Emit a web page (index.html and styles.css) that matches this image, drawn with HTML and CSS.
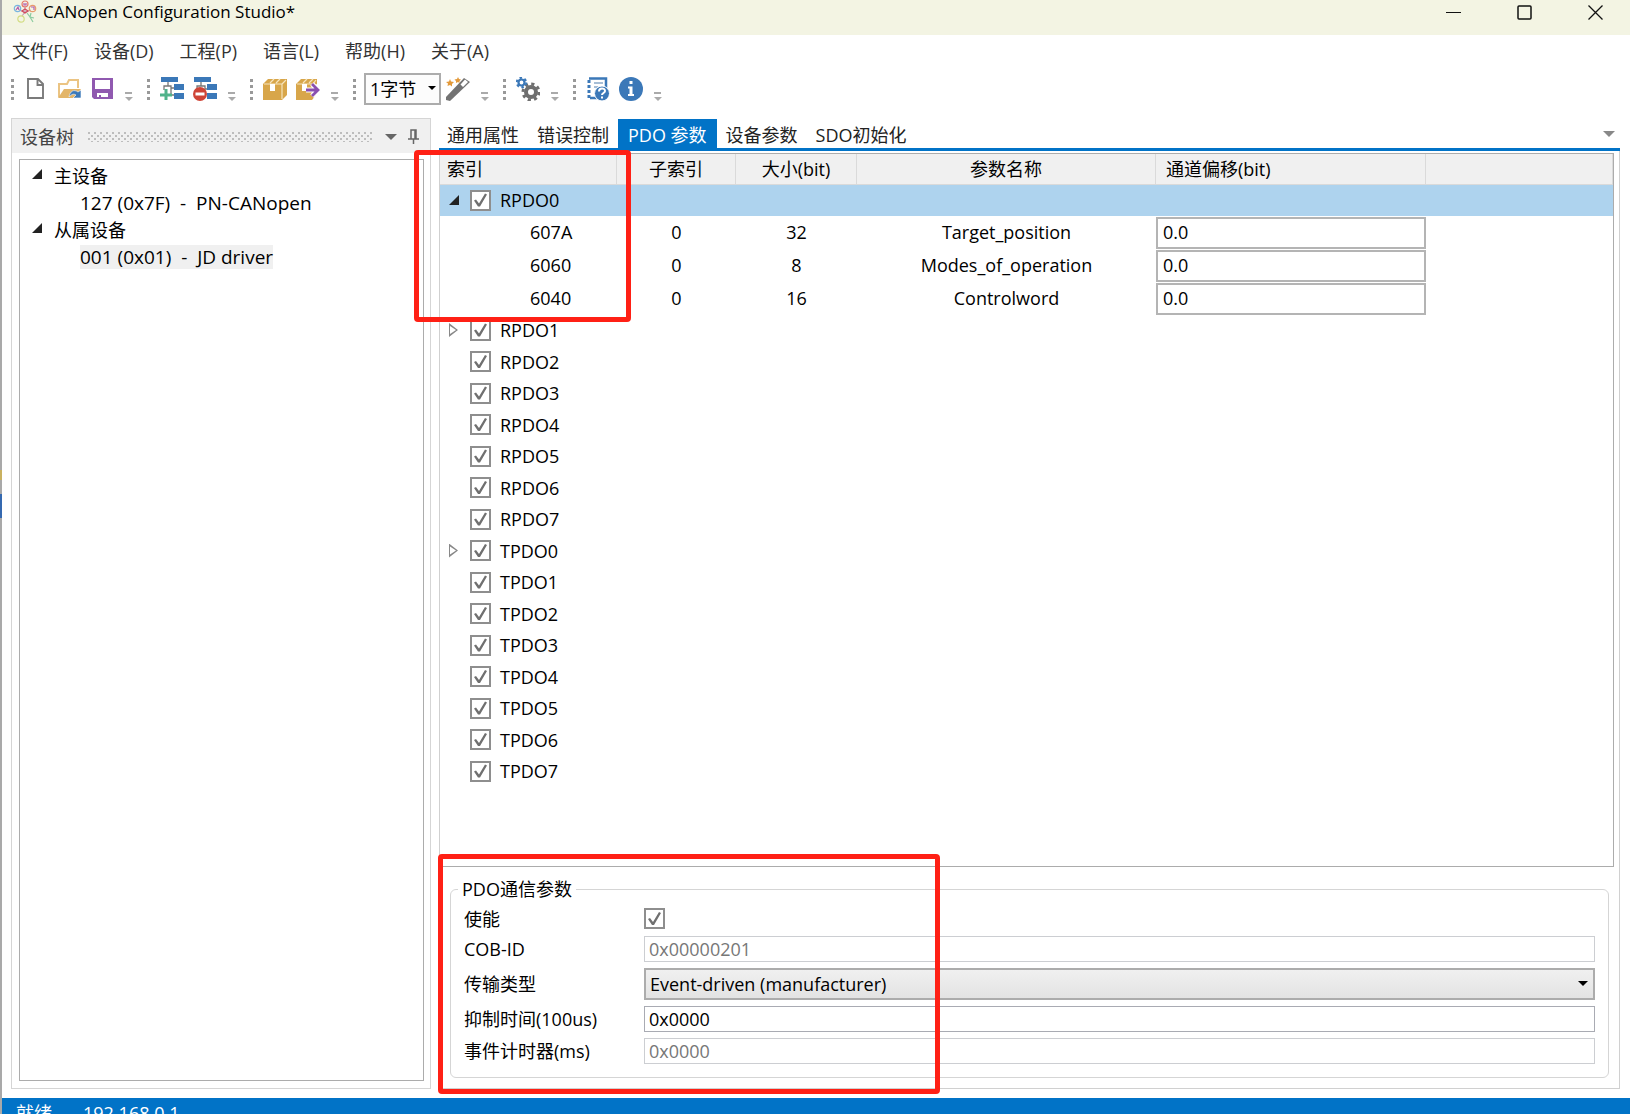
FILE: index.html
```
<!DOCTYPE html>
<html lang="zh-CN">
	<head>
		<meta charset="UTF-8" />

		<title>CANopen Configuration Studio*</title>

		<link rel="stylesheet" href="styles.css">

	</head>
	<body>

		<div id="app">

			<header id="titlebar">
				<svg class="logo" width="24" height="24" viewBox="0 0 24 24" fill="none" stroke-width="1.200">
					<path d="M12 12L6 10M12 12L12 6M12 12L18 10M12 12L9 16" stroke="#c9a0b8" />
					<circle cx="12" cy="4" r="3" stroke="#e5786b" />
					<circle cx="4.500" cy="8.500" r="3.200" stroke="#77b5e0" />
					<circle cx="19.500" cy="8.500" r="3.200" stroke="#e89a6c" />
					<circle cx="8" cy="19" r="3.200" stroke="#d3dd84" />
					<path d="M11 3v2h2V3M3 10l2-3 1 3M18 7h3v3" stroke="#b25fae" />
					<path d="M9 11l3-2 3 2-3 2z" stroke="#d04a5c" />
					<path d="M14 13l3 4M18 13l-1 4 4 1M17 17l3 5" stroke="#8ccba0" />
				</svg>
				<span class="title">CANopen Configuration Studio*</span>
				<div class="window-buttons">
					<button type="button" aria-label="最小化"><svg width="16" height="16" viewBox="0 0 16 16"><path d="M0 7.500h15" /></svg></button>
					<button type="button" aria-label="最大化"><svg width="16" height="16" viewBox="0 0 16 16"><rect x="1" y="1" width="13" height="13" rx="1" stroke-width="1.500" /></svg></button>
					<button type="button" aria-label="关闭"><svg width="16" height="16" viewBox="0 0 16 16"><path d="M.5.5l14 14M14.500.5l-14 14" stroke-width="1.300" /></svg></button>
				</div>
			</header>

			<nav id="menubar">
				<a href="#">文件(F)</a>
				<a href="#">设备(D)</a>
				<a href="#">工程(P)</a>
				<a href="#">语言(L)</a>
				<a href="#">帮助(H)</a>
				<a href="#">关于(A)</a>
			</nav>

			<div id="toolbar">
				<div class="group">
					<i class="grip"></i>
					<button type="button" class="tool" aria-label="新建">
						<svg width="24" height="24" viewBox="0 0 24 24"><path d="M4 2h10l5 5v14H4zM13.500 2v6H19" fill="#fff" stroke="#7b7b7b" stroke-width="1.900" /></svg>
					</button>
					<button type="button" class="tool" aria-label="打开">
						<svg width="24" height="24" viewBox="0 0 24 24">
							<path d="M2 20V7h8l2-4h9v8" fill="none" stroke="#ebc483" stroke-width="2" />
							<path d="M1 21l6-9h17l-5 9z" fill="#e3b569" />
							<path d="M12 20c1-6 5-8 9-5l3-2v8h-8l3-3c-3-2-5 0-7 2z" fill="#3b78b8" stroke="#fff" stroke-width=".6" />
						</svg>
					</button>
					<button type="button" class="tool" aria-label="保存">
						<svg width="24" height="24" viewBox="0 0 24 24">
							<path d="M2 1h21v21H4l-2-2z" fill="#9059b0" />
							<path d="M5 3h15v9H5zM7 16h11v4h-7v-2H9v2H7z" fill="#fff" />
						</svg>
					</button>
					<i class="overflow"></i>
				</div>
				<div class="group">
					<i class="grip"></i>
					<button type="button" class="tool" aria-label="添加设备">
						<svg width="24" height="24" viewBox="0 0 24 24">
							<path d="M8 4v5H4v4M8 9h3v9h4M11 11h4" fill="none" stroke="#777" stroke-width="1.300" />
							<path d="M1 0h17v5H1zM14 7h10v6H14zM14 16h10v6H14z" fill="#3b78b8" />
							<path d="M6 12v11M0 18h12" stroke="#4fb38a" stroke-width="3" />
						</svg>
					</button>
					<button type="button" class="tool" aria-label="删除设备">
						<svg width="24" height="24" viewBox="0 0 24 24">
							<path d="M8 4v5H4v4M8 9h4v3h3" fill="none" stroke="#777" stroke-width="1.300" />
							<path d="M1 0h17v5H1zM14 7h10v6H14zM14 16h10v6H14z" fill="#3b78b8" />
							<circle cx="7" cy="17" r="7" fill="#cf4436" />
							<path d="M2.500 17h9" stroke="#fff" stroke-width="3" />
						</svg>
					</button>
					<i class="overflow"></i>
				</div>
				<div class="group">
					<i class="grip"></i>
					<button type="button" class="tool" aria-label="打包">
						<svg width="24" height="24" viewBox="0 0 24 24">
							<path d="M0 7l5-5h19v16l-5 5H0z" fill="#d8a64a" />
							<path d="M1 7h18M19 22V7l4-4M7 6l4-4M13 6l4-4" fill="none" stroke="#f6e4bd" stroke-width="1.200" />
							<path d="M7 7h5v7H7z" fill="#fff" />
						</svg>
					</button>
					<button type="button" class="tool" aria-label="导出">
						<svg width="24" height="24" viewBox="0 0 24 24">
							<path d="M0 7l5-5h16v5l-5 3v5h4v3l-4 5H0z" fill="#d8a64a" />
							<path d="M1 7h16l3-4M7 6l4-4M13 6l4-4" fill="none" stroke="#f6e4bd" stroke-width="1.200" />
							<path d="M6 7h5v7H6z" fill="#fff" />
							<path d="M10 13h12M16 7l6 6-6 6" fill="none" stroke="#fff" stroke-width="5" />
							<path d="M10 13h12M16 7l6 6-6 6" fill="none" stroke="#8a4fb0" stroke-width="2.800" />
						</svg>
					</button>
					<i class="overflow"></i>
				</div>
				<div class="group">
					<i class="grip"></i>
					<div class="combo">
						<select aria-label="字节">
							<option>1字节</option>
							<option>2字节</option>
							<option>4字节</option>
						</select>
					</div>
					<button type="button" class="tool" aria-label="向导">
						<svg width="24" height="24" viewBox="0 0 24 24">
							<path d="M0 20L18 1l6 4L4 24l-4-1z" fill="#737373" />
							<path d="M14.500 7.500l4.500-5 3 2.500-5 5z" fill="#fff" />
							<path d="M4 2l1 2.500 3 .5-2 2v2.500L4 8 1.500 9 2 6.500 0 5l3-.5zM12 0l1 2 2 .5-1.500 1.500v2L12 5l-2 1V4L8.500 2.500 11 2z" fill="#e39a3b" />
						</svg>
					</button>
					<i class="overflow"></i>
				</div>
				<div class="group">
					<i class="grip"></i>
					<button type="button" class="tool" aria-label="设置">
						<svg width="24" height="24" viewBox="0 0 24 24" fill="none">
							<circle cx="15" cy="15" r="5" stroke="#6f6f6f" stroke-width="4" />
							<circle cx="15" cy="15" r="8" stroke="#6f6f6f" stroke-width="3" stroke-dasharray="3.140 3.140" />
							<circle cx="5.500" cy="5.500" r="3" stroke="#3b78b8" stroke-width="2.200" />
							<circle cx="5.500" cy="5.500" r="4.800" stroke="#3b78b8" stroke-width="2" stroke-dasharray="2.500 2.530" />
						</svg>
					</button>
					<i class="overflow"></i>
				</div>
				<div class="group">
					<i class="grip"></i>
					<button type="button" class="tool" aria-label="帮助">
						<svg width="24" height="24" viewBox="0 0 24 24">
							<path d="M3 1.500h17V11M4 21h7" fill="none" stroke="#3b78b8" stroke-width="2.500" />
							<path d="M3 3v18" stroke="#3b78b8" stroke-width="3" stroke-dasharray="3 2" />
							<path d="M8 6h9M8 10h4M8 16h2" stroke="#8aa9c9" stroke-width="1.500" />
							<circle cx="16" cy="16.500" r="7.500" fill="#3b78b8" stroke="#fff" />
							<path d="M13 14.500c0-4 6-4 6-.5 0 2-3 2-3 4M16 19.500v2" fill="none" stroke="#fff" stroke-width="2" />
						</svg>
					</button>
					<button type="button" class="tool" aria-label="关于">
						<svg width="24" height="24" viewBox="0 0 24 24">
							<circle cx="12" cy="12" r="12" fill="#3b78b8" />
							<path d="M10.500 4h3v3h-3zM9 9.500h4.500V17H15v2H9v-2h1.500v-5.500H9z" fill="#fff" />
						</svg>
					</button>
					<i class="overflow"></i>
				</div>
			</div>

			<main id="workspace">

				<aside id="devices">
					<div class="panel-header">
						<span>设备树</span>
						<svg class="dots" width="100%" height="10">
							<defs>
								<pattern id="dot" width="6" height="6" patternUnits="userSpaceOnUse">
									<path d="M0 0h2v2H0zM3 3h2v2H3z" fill="#bdbdbd" />
								</pattern>
							</defs>
							<rect width="100%" height="10" fill="url(#dot)" />
						</svg>
						<i class="arrow-down"></i>
						<svg width="12" height="16" viewBox="0 0 12 16"><path d="M3 10V1h5v9M7 1v9M0 10h11M5.500 10v5" fill="none" stroke="#666" stroke-width="1.500" /></svg>
					</div>
					<div class="tree">
						<ul>
							<li>
								<i class="open"></i>主设备
								<ul>
									<li><span>127 (0x7F)&nbsp; -&nbsp; PN-CANopen</span></li>
								</ul>
							</li>
							<li>
								<i class="open"></i>从属设备
								<ul>
									<li><span class="selected">001 (0x01)&nbsp; -&nbsp; JD driver</span></li>
								</ul>
							</li>
						</ul>
					</div>
				</aside>

				<section id="content">

					<div id="tabs" role="tablist">
						<button type="button" role="tab">通用属性</button>
						<button type="button" role="tab">错误控制</button>
						<button type="button" role="tab" class="active" aria-selected="true">PDO 参数</button>
						<button type="button" role="tab">设备参数</button>
						<button type="button" role="tab">SDO初始化</button>
						<i class="arrow-down"></i>
					</div>

					<div id="page">

						<div class="grid">
							<table>
								<colgroup>
									<col class="index" />
									<col class="sub" />
									<col class="size" />
									<col class="name" />
									<col class="offset" />
									<col />
								</colgroup>
								<thead>
									<tr><th>索引</th><th>子索引</th><th>大小(bit)</th><th>参数名称</th><th>通道偏移(bit)</th><th></th></tr>
								</thead>
								<tbody>
									<tr class="pdo selected"><td colspan="6"><label><i class="open"></i><input type="checkbox" checked />RPDO0</label></td></tr>
									<tr class="entry"><td>607A</td><td>0</td><td>32</td><td>Target_position</td><td><input type="text" value="0.0" aria-label="607A" /></td><td></td></tr>
									<tr class="entry"><td>6060</td><td>0</td><td>8</td><td>Modes_of_operation</td><td><input type="text" value="0.0" aria-label="6060" /></td><td></td></tr>
									<tr class="entry"><td>6040</td><td>0</td><td>16</td><td>Controlword</td><td><input type="text" value="0.0" aria-label="6040" /></td><td></td></tr>
									<tr class="pdo"><td colspan="6"><label><i class="closed"></i><input type="checkbox" checked />RPDO1</label></td></tr>
									<tr class="pdo"><td colspan="6"><label><i></i><input type="checkbox" checked />RPDO2</label></td></tr>
									<tr class="pdo"><td colspan="6"><label><i></i><input type="checkbox" checked />RPDO3</label></td></tr>
									<tr class="pdo"><td colspan="6"><label><i></i><input type="checkbox" checked />RPDO4</label></td></tr>
									<tr class="pdo"><td colspan="6"><label><i></i><input type="checkbox" checked />RPDO5</label></td></tr>
									<tr class="pdo"><td colspan="6"><label><i></i><input type="checkbox" checked />RPDO6</label></td></tr>
									<tr class="pdo"><td colspan="6"><label><i></i><input type="checkbox" checked />RPDO7</label></td></tr>
									<tr class="pdo"><td colspan="6"><label><i class="closed"></i><input type="checkbox" checked />TPDO0</label></td></tr>
									<tr class="pdo"><td colspan="6"><label><i></i><input type="checkbox" checked />TPDO1</label></td></tr>
									<tr class="pdo"><td colspan="6"><label><i></i><input type="checkbox" checked />TPDO2</label></td></tr>
									<tr class="pdo"><td colspan="6"><label><i></i><input type="checkbox" checked />TPDO3</label></td></tr>
									<tr class="pdo"><td colspan="6"><label><i></i><input type="checkbox" checked />TPDO4</label></td></tr>
									<tr class="pdo"><td colspan="6"><label><i></i><input type="checkbox" checked />TPDO5</label></td></tr>
									<tr class="pdo"><td colspan="6"><label><i></i><input type="checkbox" checked />TPDO6</label></td></tr>
									<tr class="pdo"><td colspan="6"><label><i></i><input type="checkbox" checked />TPDO7</label></td></tr>
								</tbody>
							</table>
						</div>

						<fieldset>
							<legend>PDO通信参数</legend>
							<div class="params">
								<label for="enable">使能</label>
								<input type="checkbox" id="enable" checked />
								<label for="cobid">COB-ID</label>
								<input type="text" id="cobid" value="0x00000201" disabled />
								<label for="transmission">传输类型</label>
								<div class="combo">
									<select id="transmission">
										<option>Event-driven (manufacturer)</option>
									</select>
								</div>
								<label for="inhibit">抑制时间(100us)</label>
								<input type="text" id="inhibit" value="0x0000" />
								<label for="timer">事件计时器(ms)</label>
								<input type="text" id="timer" value="0x0000" disabled />
							</div>
						</fieldset>

					</div>

				</section>

			</main>

			<footer id="statusbar">
				<span>就绪</span>
				<span>192.168.0.1</span>
			</footer>

			<!-- highlights over the PDO mapping and its parameters -->
			<div class="mark mapping"></div>
			<div class="mark communication"></div>

		</div>

	</body>
</html>
```
FILE: styles.css
```
* {
	box-sizing: border-box;
}

body, button, input, select {
	font: 18px/24px "Open Sans", "Noto Sans CJK SC", sans-serif;
	color: #000;
}

body {
	margin: 0;
	background: #FFF;
}

button {
	background: none;
	border: 0;
	padding: 0;
}

ul {
	list-style: none;
	margin: 0;
	padding: 0;
}

svg {
	display: block;
	flex: none;
}

/* the neighbouring window shows through as a thin strip on the left */
#app {
	position: relative;
	display: flex;
	flex-direction: column;
	height: 100vh;
	overflow: hidden;
	padding-left: 2px;
	background: linear-gradient(#A9A9A9 470px, #C9B160 470px, #C9B160 480px, #A9A9A9 480px, #A9A9A9 494px, #3569B0 494px, #3569B0 518px, #A9A9A9 518px) 0 0 / 2px 100% no-repeat;
}

/* Title and menu */

#titlebar {
	flex: none;
	display: flex;
	align-items: flex-start;
	height: 35px;
	padding-left: 11px;
	background: #F3F4E3;
}

#titlebar .title {
	flex: 1;
	margin-left: 6px;
	font-size: 17px;
}

.window-buttons {
	display: flex;
	gap: 55px;
	padding: 5px 26px 0 0;
}

.window-buttons svg {
	fill: none;
	stroke: #111;
}

#menubar {
	flex: none;
	display: flex;
	gap: 26px;
	height: 33px;
	padding: 4px 10px;
}

#menubar a {
	color: #333;
	text-decoration: none;
}

/* Toolbar */

#toolbar {
	flex: none;
	display: flex;
	align-items: center;
	gap: 15px;
	height: 42px;
	padding-left: 9px;
}

.group {
	display: flex;
	align-items: center;
}

.grip {
	width: 3px;
	height: 21px;
	margin-right: 8px;
	background: repeating-linear-gradient(#999 0 3px, transparent 3px 6px);
}

.tool {
	width: 24px;
	height: 24px;
	margin: 0 7px 0 2px;
}

.overflow {
	width: 7px;
	height: 9px;
	margin: 14px 0 0 4px;
	background: linear-gradient(#AAA, #AAA) 0 0 / 7px 2px no-repeat;
}

.overflow::after {
	content: "";
	display: block;
	width: 0;
	margin-top: 5px;
	border: 4px solid transparent;
	border-top-color: #AAA;
	border-bottom: 0;
}

.combo {
	position: relative;
}

.combo select {
	appearance: none;
	width: 100%;
	height: 32px;
	padding: 0 4px;
	border: 2px solid #ACACAC;
	border-radius: 0;
	background: linear-gradient(#F0F0F0, #E3E3E3);
}

.combo::after {
	content: "";
	position: absolute;
	top: 13px;
	right: 7px;
	border: 5px solid transparent;
	border-top-color: #000;
	border-bottom: 0;
	pointer-events: none;
}

#toolbar .combo {
	width: 77px;
	margin-right: 3px;
}

#toolbar .combo::after {
	right: 5px;
	border-width: 4px 4px 0;
}

#toolbar .combo select {
	background: #FCFCFC;
}

/* Workspace */

#workspace {
	flex: 1;
	display: flex;
	gap: 8px;
	min-height: 0;
	padding: 8px 10px 9px 9px;
}

#devices {
	flex: none;
	display: flex;
	flex-direction: column;
	width: 420px;
	border: 1px solid #D5D5D5;
}

.panel-header {
	flex: none;
	display: flex;
	align-items: center;
	height: 34px;
	padding: 2px 10px 0 8px;
	background: #F0F0F0;
	color: #444;
}

.panel-header .dots {
	flex: 1;
	min-width: 0;
	margin: 0 13px 0 14px;
}

.arrow-down {
	border: 6px solid transparent;
	border-top-color: #666;
	border-bottom: 0;
}

.panel-header .arrow-down {
	margin-right: 11px;
}

.tree {
	flex: 1;
	margin: 6px 6px 7px 7px;
	padding: 3px 14px;
	border: 1px solid #ACACAC;
	line-height: 27px;
}

.tree > ul > li {
	padding-left: 20px;
}

.tree .open {
	float: left;
	margin: 6px 0 0 -22px;
}

.tree li li {
	padding-left: 26px;
	font-size: 19px;
}

.tree .selected {
	display: inline-block;
	height: 24px;
	line-height: 24px;
	background: #F0F0F0;
}

.open {
	width: 10px;
	height: 10px;
	background: #222;
	clip-path: polygon(100% 0, 100% 100%, 0 100%);
}

.closed {
	width: 9px;
	height: 14px;
	background: #888;
	clip-path: polygon(0 0, 100% 50%, 0 100%, 0 0, 1px 3px, 1px 11px, 7px 50%, 1px 3px);
}

#content {
	flex: 1;
	display: flex;
	flex-direction: column;
	min-width: 0;
}

#tabs {
	flex: none;
	display: flex;
	align-items: center;
	height: 33px;
	padding-top: 1px;
	border-bottom: 3px solid #0173C7;
}

#tabs button {
	align-self: stretch;
	padding: 2px 9px 0;
	color: #222;
}

#tabs button:first-child {
	padding-left: 8px;
}

#tabs .active {
	padding: 2px 10px 0;
	background: #0173C7;
	color: #FFF;
}

#tabs .arrow-down {
	margin: 0 5px 0 auto;
	border-top-color: #888;
}

#page {
	flex: 1;
	display: flex;
	flex-direction: column;
	min-height: 0;
	padding-top: 2px;
	border: 1px solid #D0D0D0;
	border-top: 0;
}

/* PDO table */

.grid {
	flex: 1;
	min-height: 0;
	margin-right: 5px;
	overflow: hidden;
	border: 1px solid #ACACAC;
	border-width: 1px 1px 1px 0;
}

table {
	width: 100%;
	table-layout: fixed;
	border-spacing: 0;
}

.index {
	width: 177px;
}

.sub {
	width: 119px;
}

.size {
	width: 121px;
}

.name {
	width: 299px;
}

.offset {
	width: 270px;
}

th, td {
	padding: 0;
	text-align: center;
}

th {
	height: 31px;
	border: 1px solid #DADADA;
	border-width: 0 1px 1px 0;
	background: #F0F0F0;
	font-weight: normal;
}

th:first-child, th:nth-child(5) {
	padding-left: 7px;
	text-align: left;
}

th:nth-child(5) {
	padding-left: 10px;
}

.pdo {
	height: 31px;
}

.pdo:nth-child(even) {
	height: 32px;
}

.pdo.selected {
	background: #AED3EE;
}

.pdo label {
	display: flex;
	align-items: center;
	padding: 0 0 1px 9px;
}

.pdo i {
	margin-right: 11px;
}

.pdo i:not(.open) {
	width: 9px;
	margin-right: 12px;
}

.entry {
	height: 33px;
}

.entry td {
	padding-bottom: 2px;
}

.entry td:nth-child(5) {
	padding: 0;
}

.entry td:first-child {
	padding-left: 90px;
	text-align: left;
}

.entry input {
	display: block;
	width: 100%;
	height: 32px;
}

.entry input[type="text"] {
	padding: 0 5px 2px;
	border: 2px solid #B4B4B4;
}

input[type="text"] {
	border: 1px solid #A9ABB3;
	background: #FFF;
}

input[type="checkbox"] {
	appearance: none;
	width: 21px;
	height: 21px;
	margin: 0;
	border: 2px solid #8E8E8E;
	background: #FFF;
}

input[type="checkbox"]:checked::after {
	content: "";
	display: block;
	width: 17px;
	height: 17px;
	background: #707070;
	clip-path: polygon(2px 9px, 4px 8px, 7px 12px, 13px 2px, 15px 3px, 8px 15px, 6px 15px);
}

.pdo input[type="checkbox"] {
	margin-right: 9px;
}

/* Communication parameters */

fieldset {
	flex: none;
	margin: 10px;
	padding: 6px 13px 13px;
	border: 1px solid #D5D5D5;
	border-radius: 6px;
}

legend {
	margin-left: -6px;
	padding: 0 4px;
}

.params {
	display: grid;
	grid-template-columns: 180px 1fr;
	grid-template-rows: 23px 26px 32px 26px 26px;
	gap: 6px 0;
	align-items: center;
}

.params input[type="text"] {
	width: 100%;
	height: 26px;
	padding: 0 4px;
}

.params input:disabled {
	border-color: #CCCED2;
	color: #777;
}

/* Status bar, cut off by the lower window edge */

#statusbar {
	flex: none;
	display: flex;
	gap: 31px;
	height: 16px;
	padding: 3px 14px;
	overflow: hidden;
	background: #0173C7;
	color: #FFF;
}

.mark {
	position: absolute;
	border: 5px solid #FF2015;
	border-radius: 4px;
	pointer-events: none;
}

.mapping {
	top: 150px;
	left: 414px;
	width: 217px;
	height: 172px;
}

.communication {
	bottom: 20px;
	left: 438px;
	width: 502px;
	height: 240px;
}
```
